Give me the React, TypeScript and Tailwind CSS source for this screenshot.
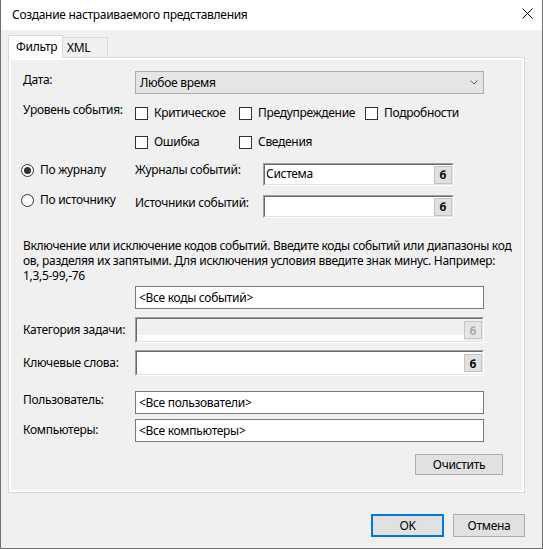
import React from "react";

// Small "б" browse button used inside the sunken pick boxes
function PickButton({ disabled }: { disabled?: boolean }) {
  return (
    <div
      className={`w-[18px] h-[18px] shrink-0 border border-[#c4c4c4] flex items-center justify-center text-[11px] font-bold leading-none tracking-normal ${
        disabled ? "bg-[#e6e6e6] text-[#a8a8a8]" : "bg-[#e1e1e1] text-black"
      }`}
    >
      б
    </div>
  );
}

// Classic sunken (Fixed3D) box with a browse button on the right
function PickBox({
  value,
  width,
  height,
  disabled,
}: {
  value?: string;
  width: number;
  height: number;
  disabled?: boolean;
}) {
  return (
    <div
      className="border border-t-[#a0a0a0] border-l-[#a0a0a0] border-b-white border-r-white shrink-0"
      style={{ width, height }}
    >
      <div className="h-full border border-t-[#696969] border-l-[#696969] border-b-[#e3e3e3] border-r-[#e3e3e3] flex">
        {disabled ? (
          <div className="flex-1 flex flex-col">
            <div className="flex-1 bg-[#f0f0f0]" />
            <div className="h-[6px] bg-white" />
          </div>
        ) : (
          <div className="flex-1 bg-white pl-[1px] leading-[17px]">{value}</div>
        )}
        <div className={`flex items-center ${disabled ? "bg-[#f0f0f0]" : "bg-white"}`}>
          <PickButton disabled={disabled} />
        </div>
      </div>
    </div>
  );
}

function TextBox({ value, width = 349 }: { value: string; width?: number }) {
  return (
    <div
      className="h-[23px] border border-[#7a7a7a] bg-white flex items-center pl-[3px] shrink-0"
      style={{ width }}
    >
      {value}
    </div>
  );
}

function Check({ label, width }: { label: string; width: number }) {
  return (
    <div className="flex items-center gap-[6px] h-[16px] shrink-0" style={{ width }}>
      <span className="w-[13px] h-[13px] border border-[#333333] bg-white shrink-0" />
      <span>{label}</span>
    </div>
  );
}

function Radio({ label, checked }: { label: string; checked?: boolean }) {
  return (
    <div className="flex items-center gap-[6px] h-[16px]">
      <span className="w-[13px] h-[13px] rounded-full border border-[#333333] bg-white flex items-center justify-center shrink-0">
        {checked && <span className="w-[7px] h-[7px] rounded-full bg-[#333333]" />}
      </span>
      <span>{label}</span>
    </div>
  );
}

function Label({ text, className = "" }: { text: string; className?: string }) {
  return <div className={`w-[112px] shrink-0 whitespace-nowrap ${className}`}>{text}</div>;
}

export default function App() {
  return (
    <div className="w-[543px] h-[549px] flex flex-col bg-[#f0f0f0] border-x border-b border-[#707070] font-['Noto_Sans',sans-serif] text-[12px] leading-[16px] tracking-[-0.3px] text-black overflow-hidden">
      {/* title bar */}
      <div className="h-[30px] shrink-0 bg-white flex items-center justify-between pl-[11px]">
        <span>Создание настраиваемого представления</span>
        <svg width="11" height="11" viewBox="0 0 11 11" className="self-start mt-[8px] mr-[9px]">
          <path d="M0.5 0.5 L10.5 10.5 M10.5 0.5 L0.5 10.5" stroke="#000" strokeWidth="1" />
        </svg>
      </div>

      {/* tabs */}
      <div className="mt-[5px] ml-[7px] flex items-end h-[23px] relative z-10">
        <div className="w-[55px] h-[23px] bg-white border border-b-0 border-[#d9d9d9] flex items-center pl-[7px]">
          Фильтр
        </div>
        <div className="w-[45px] h-[20px] mb-px bg-[#f0f0f0] border border-l-0 border-b-0 border-[#d9d9d9] flex items-center pl-[4px]">
          XML
        </div>
      </div>

      {/* tab page */}
      <div className="-mt-px ml-[7px] w-[517px] h-[436px] border border-[#d9d9d9] bg-white p-[2px] shrink-0">
        <div className="h-full bg-[#f0f0f0] flex flex-col pl-[12px]">
          <div className="mt-[11px] flex items-start h-[23px]">
            <Label text="Дата:" className="mt-[1px]" />
            <div className="w-[349px] h-[23px] border border-[#adadad] bg-[#e5e5e5] flex items-center justify-between pl-[4px] pr-[5px]">
              <span>Любое время</span>
              <svg width="8" height="5" viewBox="0 0 8 5">
                <path d="M0.5 0.5 L4 4 L7.5 0.5" stroke="#606060" fill="none" strokeWidth="1" />
              </svg>
            </div>
          </div>

          <div className="mt-[11px] flex items-start h-[16px]">
            <Label text="Уровень события:" className="-mt-[3px]" />
            <Check label="Критическое" width={104} />
            <Check label="Предупреждение" width={126} />
            <Check label="Подробности" width={110} />
          </div>

          <div className="mt-[13px] flex items-start h-[16px]">
            <div className="w-[112px] shrink-0" />
            <Check label="Ошибка" width={104} />
            <Check label="Сведения" width={126} />
          </div>

          <div className="mt-[13px] flex items-start h-[23px]">
            <div className="-ml-[2px] w-[114px] shrink-0 -mt-[1px]">
              <Radio label="По журналу" checked />
            </div>
            <div className="w-[128px] shrink-0 -mt-[1px]">Журналы событий:</div>
            <PickBox value="Система" width={191} height={23} />
          </div>

          <div className="mt-[9px] flex items-start h-[23px]">
            <div className="-ml-[2px] w-[114px] shrink-0 -mt-[3px]">
              <Radio label="По источнику" />
            </div>
            <div className="w-[128px] shrink-0">Источники событий:</div>
            <PickBox width={191} height={23} />
          </div>

          <div className="mt-[20px] leading-[15px] whitespace-nowrap">
            <div>Включение или исключение кодов событий. Введите коды событий или диапазоны код</div>
            <div>ов, разделяя их запятыми. Для исключения условия введите знак минус. Например:</div>
            <div>1,3,5-99,-76</div>
          </div>

          <div className="mt-[3px] ml-[112px]">
            <TextBox value="<Все коды событий>" />
          </div>

          <div className="mt-[8px] flex items-center h-[26px]">
            <Label text="Категория задачи:" />
            <PickBox width={349} height={26} disabled />
          </div>

          <div className="mt-[7px] flex items-center h-[26px]">
            <Label text="Ключевые слова:" />
            <PickBox width={349} height={26} />
          </div>

          <div className="mt-[15px] flex items-start h-[23px]">
            <Label text="Пользователь:" className="mt-[1px]" />
            <TextBox value="<Все пользователи>" />
          </div>

          <div className="mt-[5px] flex items-start h-[23px]">
            <Label text="Компьютеры:" className="mt-[3px]" />
            <TextBox value="<Все компьютеры>" />
          </div>

          <div className="mt-[12px] ml-[392px] w-[88px] h-[21px] border border-[#adadad] bg-[#e1e1e1] flex items-center justify-center">
            Очистить
          </div>
        </div>
      </div>

      {/* dialog buttons */}
      <div className="mt-[21px] ml-[370px] flex gap-[9px]">
        <div className="w-[73px] h-[23px] border-2 border-[#0078d7] bg-[#e1e1e1] flex items-center justify-center">
          OK
        </div>
        <div className="w-[72px] h-[23px] border border-[#adadad] bg-[#e1e1e1] flex items-center justify-center">
          Отмена
        </div>
      </div>
    </div>
  );
}
